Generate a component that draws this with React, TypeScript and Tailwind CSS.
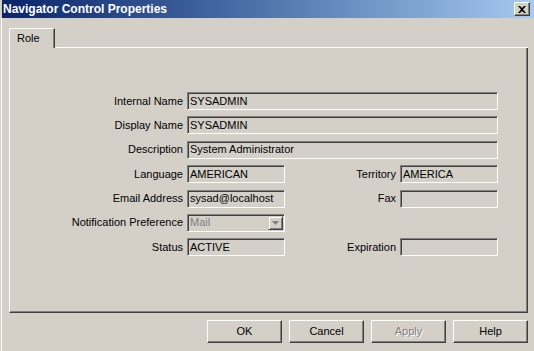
import React from 'react';

// classic Windows 2000 dialog colours
const face = 'bg-[#d4d0c8]';
const font = { fontFamily: '"Liberation Sans", Arial, sans-serif' };

const Field = ({ value, className = '' }: { value?: string; className?: string }) => (
  <div
    className={`h-[18px] border border-t-[#808080] border-l-[#808080] border-b-white border-r-white shadow-[inset_1px_1px_0_#404040,inset_-1px_-1px_0_#d4d0c8] ${face} pl-[2px] flex items-center text-[11px] text-black leading-none whitespace-nowrap overflow-hidden ${className}`}
  >
    {value}
  </div>
);

const Label = ({ children, className = '' }: { children: React.ReactNode; className?: string }) => (
  <div className={`text-[11px] text-black text-right leading-none whitespace-nowrap ${className}`}>{children}</div>
);

const Button = ({ label, disabled }: { label: string; disabled?: boolean }) => (
  <div className="w-[75px] h-[23px] border border-t-white border-l-white border-b-[#404040] border-r-[#404040] shadow-[inset_-1px_-1px_0_#808080] bg-[#d4d0c8] flex items-center justify-center text-[11px] leading-none">
    {disabled ? (
      <span className="text-[#808080] [text-shadow:1px_1px_0_#ffffff]">{label}</span>
    ) : (
      <span className="text-black">{label}</span>
    )}
  </div>
);

export default function App() {
  return (
    <div className={`w-[534px] h-[351px] ${face} flex flex-col overflow-hidden`} style={font}>
      {/* title bar */}
      <div className="h-[18px] ml-[2px] flex items-center justify-between bg-gradient-to-r from-[#0a246a] to-[#a6caf0] pl-[1px] pr-[4px]">
        <span className="text-white font-bold text-[12px] leading-none">Navigator Control Properties</span>
        <div className="w-[16px] h-[14px] border border-t-white border-l-white border-b-[#404040] border-r-[#404040] shadow-[inset_-1px_-1px_0_#808080] bg-[#d4d0c8] flex items-center justify-center">
          <svg width="8" height="7" viewBox="0 0 8 7">
            <path d="M0 0h2l2 2 2-2h2L5 3.5 8 7H6L4 5 2 7H0l3-3.5z" fill="#000" />
          </svg>
        </div>
      </div>

      {/* body */}
      <div className="flex-1 border-l border-white ml-[1px] pl-[7px] pr-[6px] pt-[10px]">
        {/* tab strip */}
        <div className="flex h-[20px] items-end">
          <div className="w-[46px] h-[20px] border-t border-l border-white border-r border-r-[#404040] rounded-tl-[2px] shadow-[inset_-1px_0_0_#808080] flex items-center pl-[7px] text-[11px] text-black leading-none">
            Role
          </div>
          <div className="flex-1 border-b border-white" />
        </div>

        {/* tab panel */}
        <div className="h-[265px] border-l border-white border-r border-r-[#404040] border-b border-b-[#404040] shadow-[inset_-1px_-1px_0_#808080] pt-[44px]">
          <div className="flex flex-col gap-[6.4px]">
            <div className="flex items-center">
              <Label className="w-[173px]">Internal Name</Label>
              <Field value="SYSADMIN" className="ml-[4px] w-[311px]" />
            </div>
            <div className="flex items-center">
              <Label className="w-[173px]">Display Name</Label>
              <Field value="SYSADMIN" className="ml-[4px] w-[311px]" />
            </div>
            <div className="flex items-center">
              <Label className="w-[173px]">Description</Label>
              <Field value="System Administrator" className="ml-[4px] w-[311px]" />
            </div>
            <div className="flex items-center">
              <Label className="w-[173px]">Language</Label>
              <Field value="AMERICAN" className="ml-[4px] w-[98px]" />
              <Label className="w-[111px]">Territory</Label>
              <Field value="AMERICA" className="ml-[4px] w-[98px]" />
            </div>
            <div className="flex items-center">
              <Label className="w-[173px]">Email Address</Label>
              <Field value="sysad@localhost" className="ml-[4px] w-[98px]" />
              <Label className="w-[111px]">Fax</Label>
              <Field className="ml-[4px] w-[98px]" />
            </div>
            <div className="flex items-center">
              <Label className="w-[173px]">Notification Preference</Label>
              <div className="ml-[4px] w-[98px] h-[18px] border border-t-[#808080] border-l-[#808080] border-b-white border-r-white shadow-[inset_1px_1px_0_#404040,inset_-1px_-1px_0_#d4d0c8] bg-[#d4d0c8] flex items-center pl-[2px] pr-[1px]">
                <span className="flex-1 text-[11px] text-[#808080] leading-none">Mail</span>
                <div className="w-[15px] h-[14px] border border-t-[#d4d0c8] border-l-[#d4d0c8] border-b-[#404040] border-r-[#404040] shadow-[inset_1px_1px_0_#ffffff,inset_-1px_-1px_0_#808080] bg-[#d4d0c8] flex items-center justify-center">
                  <svg width="7" height="4" viewBox="0 0 7 4">
                    <path d="M0 0h7L3.5 4z" fill="#808080" />
                  </svg>
                </div>
              </div>
            </div>
            <div className="flex items-center">
              <Label className="w-[173px]">Status</Label>
              <Field value="ACTIVE" className="ml-[4px] w-[98px]" />
              <Label className="w-[111px]">Expiration</Label>
              <Field className="ml-[4px] w-[98px]" />
            </div>
          </div>
        </div>

        {/* buttons */}
        <div className="flex justify-end gap-[7px] mt-[7px]">
          <Button label="OK" />
          <Button label="Cancel" />
          <Button label="Apply" disabled />
          <Button label="Help" />
        </div>
      </div>
    </div>
  );
}
